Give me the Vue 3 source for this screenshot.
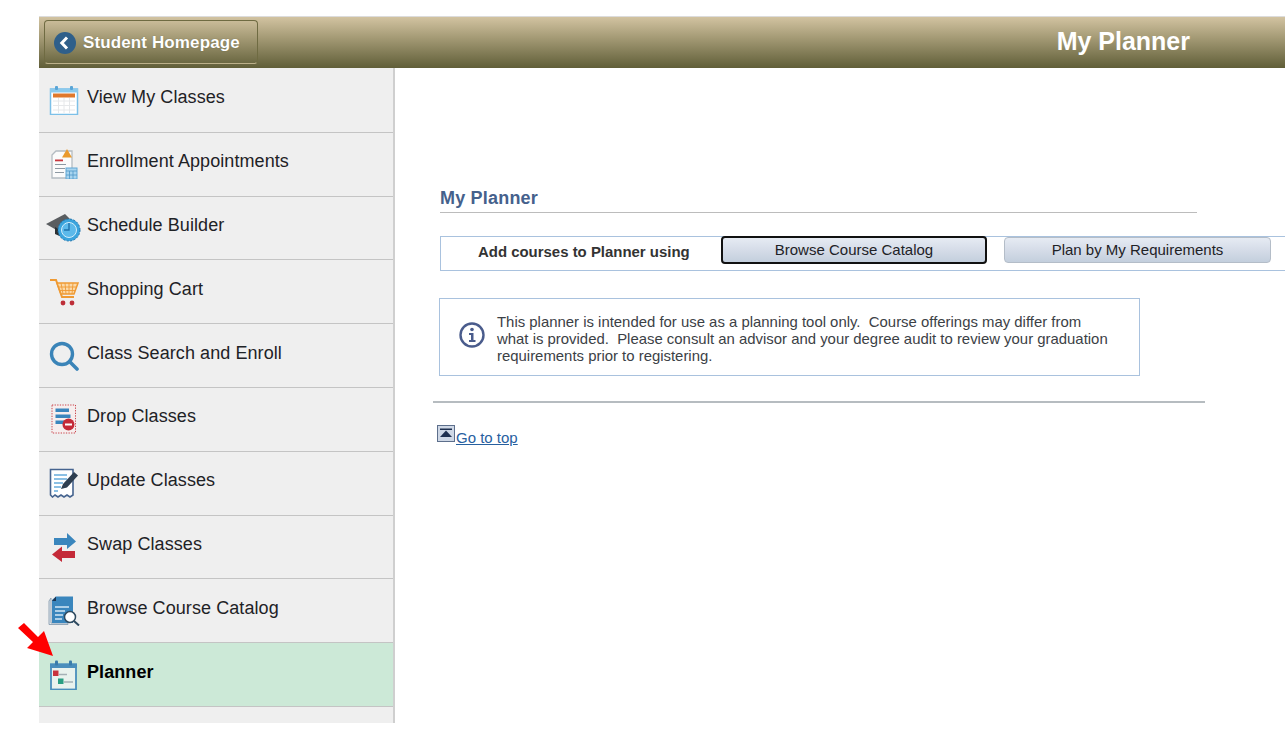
<template>
  <div class="page">
    <header class="top-bar">
      <a class="home-btn">
        <svg class="back-icon" viewBox="0 0 22 22" width="22" height="22">
          <circle cx="11" cy="11" r="11" fill="#2f5f8a" />
          <path d="M13 5.5 L7.8 11 L13 16.5" fill="none" stroke="#fff" stroke-width="3" />
        </svg>
        <span>Student Homepage</span>
      </a>
      <h1 class="page-title">My Planner</h1>
    </header>

    <div class="body-row">
      <nav class="side-menu">
        <div v-for="item in menu" :key="item.label" :class="['menu-row', { active: item.active }]">
          <span class="menu-icon">
            <svg v-if="item.icon === 'calendar'" viewBox="0 0 30 30" width="30" height="30">
              <rect x="1.5" y="4" width="27" height="25.500" fill="#fff" stroke="#7cc0e8" stroke-width="1.5" />
              <rect x="1" y="3.5" width="28" height="4" fill="#8ccaed" />
              <rect x="6" y="1" width="3" height="4" rx="1" fill="#5aa5d6" />
              <rect x="21" y="1" width="3" height="4" rx="1" fill="#5aa5d6" />
              <rect x="4" y="8.500" width="22" height="4" fill="#e0782c" />
              <path d="M4 16H26M4 20.500H26M4 25H26M9.5 13V28M15 13V28M20.5 13V28" stroke="#e6e8ea" stroke-width="1" fill="none" />
            </svg>
            <svg v-else-if="item.icon === 'appointment'" viewBox="0 0 30 30" width="30" height="30">
              <path d="M3 6 L7 2 H23 V29 H3Z" fill="#fbfbfb" stroke="#b4bcc2" stroke-width="1.3" />
              <path d="M13 8.500 L18 0 L23 8.500Z" fill="#ea9a2e" />
              <rect x="6" y="10.500" width="8" height="1.800" fill="#c8383f" />
              <path d="M6 15.500H17M6 19.500H16M6 23.500H15" stroke="#8d99a3" stroke-width="1.200" />
              <rect x="17" y="19" width="11" height="11" fill="#a9d5ef" stroke="#62a8d6" />
              <path d="M17 22H28M20.5 22V30M24 22V30M17 26H28" stroke="#4e97c8" stroke-width=".8" />
            </svg>
            <svg v-else-if="item.icon === 'builder'" viewBox="0 0 36 30" width="36" height="30">
              <path d="M0 11 L19 1 L26 8 L14 19Z" fill="#5a5d60" />
              <path d="M9 14 L18 19 V25 L9 21Z" fill="#2e3032" />
              <circle cx="23" cy="17" r="11" fill="#3aa4dd" stroke="#1f73ad" stroke-width="1" stroke-dasharray="2 1.5" />
              <circle cx="23" cy="17" r="7.5" fill="#5cb9ea" stroke="#d4eefb" stroke-width="1" />
              <path d="M23 10 V17 H18" stroke="#1f73ad" stroke-width="1.4" fill="none" />
            </svg>
            <svg v-else-if="item.icon === 'cart'" viewBox="0 0 30 30" width="30" height="30">
              <path d="M1 3 H7 L13 20 H25" fill="none" stroke="#ef9a33" stroke-width="2" />
              <path d="M8 6 H29 L25 17 H12Z" fill="#fbd9a8" stroke="#ef9a33" stroke-width="1.5" />
              <path d="M12 6 L14 17M16 6 L17 17M20 6 L20 17M24 6 L23 17M9 10H28M10.5 13.5H26.5" stroke="#ef9a33" stroke-width=".9" />
              <circle cx="14" cy="26" r="2.4" fill="#bd2e38" />
              <circle cx="23" cy="26" r="2.4" fill="#bd2e38" />
            </svg>
            <svg v-else-if="item.icon === 'search'" viewBox="0 0 30 30" width="30" height="30">
              <circle cx="13" cy="13" r="10.5" fill="none" stroke="#3a84b8" stroke-width="3.4" />
              <path d="M20.5 20.5 L28 28" stroke="#3a84b8" stroke-width="3.6" stroke-linecap="round" />
            </svg>
            <svg v-else-if="item.icon === 'drop'" viewBox="0 0 30 30" width="30" height="30">
              <rect x="3" y="1" width="23.500" height="28" fill="#f6eeee" stroke="#c9454c" stroke-width="1" stroke-dasharray="1.3 1.3" />
              <path d="M6.500 4.500H20V8H6.500ZM6.500 10.500H21.500V14H6.500ZM6.500 16.500H16V20H6.500Z" fill="#3a86bd" />
              <circle cx="19.500" cy="20.500" r="6" fill="#c42a38" />
              <rect x="16" y="19.500" width="7" height="2" fill="#fff" />
            </svg>
            <svg v-else-if="item.icon === 'update'" viewBox="0 0 30 30" width="30" height="30">
              <path d="M1.5 1.5 H24 V27 L21 29 L18 27 L15 29 L12 27 L9 29 L6 27 L3.5 29 L1.5 27Z" fill="#fff" stroke="#46648f" stroke-width="1.6" />
              <path d="M5 7H18M5 11H18M5 15H14M5 19H12M5 23H9" stroke="#8cc0e4" stroke-width="2" />
              <path d="M12 21 L14 16 L25 4 L29 7.5 L18 19.5Z" fill="#2e3e50" />
            </svg>
            <svg v-else-if="item.icon === 'swap'" viewBox="0 0 30 30" width="30" height="30">
              <path d="M5 6 H18 V1 L27 9.5 L18 17 V13 H5Z" fill="#3a86bd" />
              <path d="M26 19 H13 V14.500 L3 22.500 L13 30 V26 H26Z" fill="#c42a38" />
            </svg>
            <svg v-else-if="item.icon === 'catalog'" viewBox="0 0 32 30" width="32" height="30">
              <path d="M1 5 L3 2 V27 H20 V28.500 H1Z" fill="#dfe6ec" stroke="#7d95aa" stroke-width=".8" />
              <path d="M4 4 L8 0.5 H25 V27 H4Z" fill="#3a86bd" />
              <path d="M8 0.500 V5 H4Z" fill="#1e3550" />
              <path d="M7 11H21M7 15H17M7 19H15M7 23H14" stroke="#d4e8f5" stroke-width="1.5" />
              <circle cx="22" cy="21" r="5.500" fill="#fff" stroke="#2f4a5f" stroke-width="1.500" />
              <path d="M26 25 L31 29.500" stroke="#2f4a5f" stroke-width="2" />
            </svg>
            <svg v-else-if="item.icon === 'planner'" viewBox="0 0 30 30" width="30" height="30">
              <rect x="2" y="4.500" width="25" height="25" fill="#e9f2ee" stroke="#4a8ebc" stroke-width="1.800" />
              <rect x="1" y="3.500" width="27" height="4.500" fill="#4a8ebc" />
              <rect x="6" y="0.500" width="3" height="5" rx="1" fill="#3a7cab" />
              <rect x="20" y="0.500" width="3" height="5" rx="1" fill="#3a7cab" />
              <rect x="4" y="10.500" width="5.500" height="5.500" fill="#c8323e" />
              <path d="M10 14.500H18" stroke="#a5b0b6" stroke-width="1.500" />
              <rect x="9" y="18.500" width="5.500" height="5.500" fill="#2a9e83" />
              <path d="M15 22H24" stroke="#a5b0b6" stroke-width="1.500" />
            </svg>
          </span>
          <span class="menu-label">{{ item.label }}</span>
        </div>
        <div class="menu-tail"></div>
      </nav>

      <main class="content">
        <h2 class="section-title">My Planner</h2>

        <div class="add-bar">
          <span class="add-label">Add courses to Planner using</span>
          <button class="pill focused">Browse Course Catalog</button>
          <button class="pill second">Plan by My Requirements</button>
        </div>

        <div class="notice">
          <svg class="info-icon" viewBox="0 0 26 26" width="26" height="26">
            <circle cx="13" cy="13" r="11.500" fill="#fff" stroke="#4a5c8c" stroke-width="2.400" />
            <circle cx="13" cy="7.500" r="1.800" fill="#4a5c8c" />
            <path d="M10 11 H14.500 V18 H16.500 V20 H10 V18 H12 V13 H10Z" fill="#4a5c8c" />
          </svg>
          <p>This planner is intended for use as a planning tool only.&nbsp; Course offerings may differ from<br />what is provided.&nbsp; Please consult an advisor and your degree audit to review your graduation<br />requirements prior to registering.</p>
        </div>

        <hr class="rule" />

        <div class="to-top">
          <svg viewBox="0 0 18 18" width="18" height="18">
            <rect x="0.500" y="0.500" width="17" height="16" fill="#cfd8e6" stroke="#5d6f8c" />
            <rect x="3" y="3.500" width="12" height="1.500" fill="#1f3050" />
            <path d="M9 5.500 L15 12 H3Z" fill="#1f3050" />
          </svg>
          <a>Go to top</a>
        </div>
      </main>
    </div>

    <svg class="pointer" viewBox="0 0 40 40" width="40" height="40">
      <path d="M2 11 L8 6 L22 20 L28 14 L37 39 L11 31 L17 25Z" fill="#ff0000" />
    </svg>
  </div>
</template>

<script setup>
const menu = [
  { label: 'View My Classes', icon: 'calendar' },
  { label: 'Enrollment Appointments', icon: 'appointment' },
  { label: 'Schedule Builder', icon: 'builder' },
  { label: 'Shopping Cart', icon: 'cart' },
  { label: 'Class Search and Enroll', icon: 'search' },
  { label: 'Drop Classes', icon: 'drop' },
  { label: 'Update Classes', icon: 'update' },
  { label: 'Swap Classes', icon: 'swap' },
  { label: 'Browse Course Catalog', icon: 'catalog' },
  { label: 'Planner', icon: 'planner', active: true }
]
</script>

<style>
html, body {
  margin: 0;
  background: #fff;
  overflow: hidden;
}
</style>

<style scoped>
.page {
  position: relative;
  width: 1285px;
  height: 732px;
  padding: 16px 0 0 39px;
  box-sizing: border-box;
  font-family: "Liberation Sans", Arial, sans-serif;
  color: #1e2226;
  overflow: hidden;
}

.top-bar {
  height: 52px;
  display: flex;
  align-items: center;
  justify-content: space-between;
  padding: 0 95px 0 5px;
  box-sizing: border-box;
  background: linear-gradient(to bottom, #d2c3a1 0%, #a59b76 40%, #605e38 100%);
  border-top: 1px solid #dcdcdc;
}

.home-btn {
  width: 214px;
  height: 44px;
  margin-top: -2px;
  box-sizing: border-box;
  display: flex;
  align-items: center;
  gap: 7px;
  padding: 2px 0 0 9px;
  border: 1px solid #6f6b42;
  border-bottom-color: #bcb08a;
  border-radius: 4px;
  color: #fff;
  font-size: 17px;
  font-weight: 700;
  letter-spacing: 0.12px;
  text-shadow: 0 0 1px rgba(60, 60, 30, 0.5);
}

.page-title {
  margin: -2px 0 0;
  font-size: 25px;
  font-weight: 700;
  color: #fff;
}

.body-row {
  display: flex;
  align-items: flex-start;
}

.side-menu {
  width: 356px;
  flex: none;
  box-sizing: border-box;
  padding-top: 1px;
  background: #efefef;
  border-right: 2px solid #cfcfcf;
}

.menu-row {
  height: 63.8px;
  box-sizing: border-box;
  display: flex;
  align-items: center;
  padding: 0 0 5px 1px;
  border-bottom: 1px solid #c4c4c4;
  letter-spacing: 0.08px;
}

.menu-row.active {
  background: #cce9d7;
  color: #000;
  font-weight: 700;
}

.menu-icon {
  width: 47px;
  flex: none;
  display: flex;
  align-items: center;
  justify-content: center;
  padding-top: 5px;
}

.menu-label {
  font-size: 18px;
}

.menu-tail {
  height: 16px;
}

.content {
  flex: 1;
  min-width: 0;
  padding: 120px 0 0 38px;
}

.section-title {
  width: 757px;
  margin: 0 0 23px 7px;
  padding-bottom: 3px;
  border-bottom: 1px solid #bcbcbc;
  font-size: 18px;
  font-weight: 700;
  letter-spacing: 0.2px;
  color: #45618c;
}

.add-bar {
  height: 35px;
  margin-left: 7px;
  box-sizing: border-box;
  display: flex;
  align-items: flex-start;
  border: 1px solid #a9c2de;
  border-right: 0;
}

.add-label {
  width: 280px;
  flex: none;
  padding: 6px 0 0 37px;
  box-sizing: border-box;
  font-size: 14.95px;
  font-weight: 700;
  color: #333;
}

.pill {
  height: 26px;
  padding: 0 0 2px;
  box-sizing: border-box;
  font-family: inherit;
  font-size: 15px;
  color: #1e2226;
  background: linear-gradient(to bottom, #e6ebf3 0%, #d5dce8 50%, #c3cfdd 100%);
  border: 1px solid #b4bdc8;
  border-radius: 4px;
}

.pill.focused {
  width: 266px;
  height: 28px;
  margin-top: -1px;
  border: 2px solid #111;
}

.pill.second {
  width: 267px;
  margin-left: 17px;
}

.notice {
  width: 701px;
  height: 78px;
  margin: 27px 0 0 6px;
  box-sizing: border-box;
  display: flex;
  align-items: center;
  gap: 12px;
  padding: 0 0 0 19px;
  border: 1px solid #a9c2de;
}

.info-icon {
  flex: none;
  margin-bottom: 4px;
}

.notice p {
  margin: 0;
  padding-top: 3px;
  font-size: 14.92px;
  line-height: 17px;
  color: #3c4146;
  white-space: nowrap;
}

.rule {
  width: 772px;
  height: 2px;
  margin: 25px 0 0;
  border: 0;
  background: #b6bcc0;
}

.to-top {
  display: flex;
  align-items: flex-start;
  margin: 22px 0 0 4px;
  font-size: 15px;
}

.to-top a {
  margin-top: 4px;
  margin-left: 1px;
  color: #27609f;
  text-decoration: underline;
}

/* annotation arrow drawn over the screenshot */
.pointer {
  position: absolute;
  left: 16px;
  top: 617px;
}
</style>
